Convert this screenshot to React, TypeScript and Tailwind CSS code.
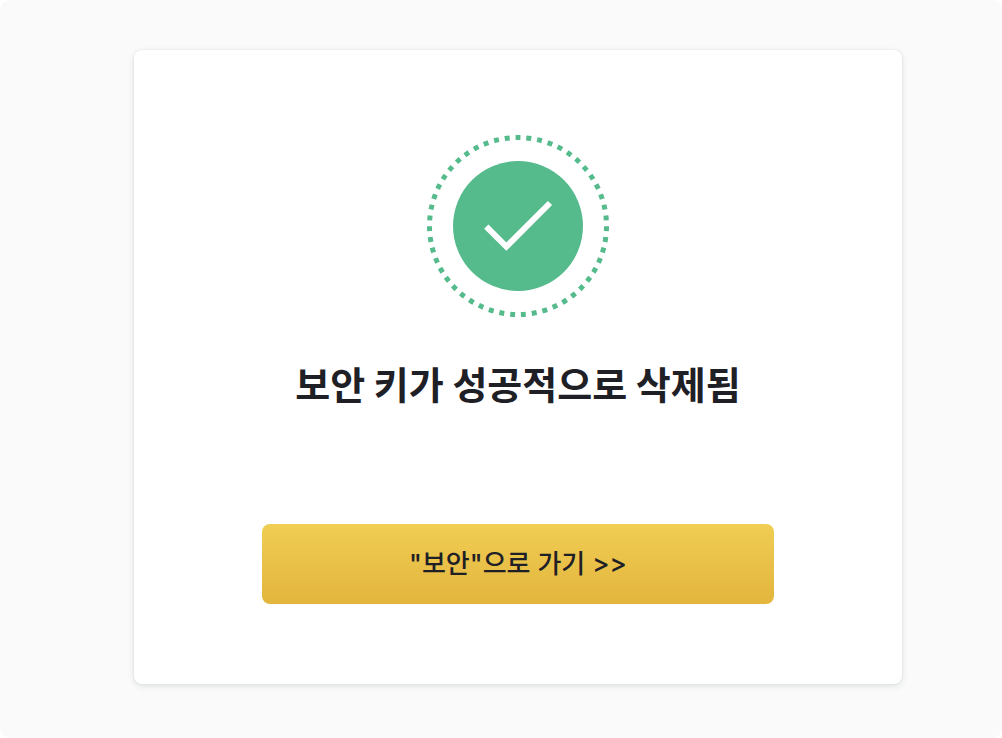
import React from "react";

function SuccessIcon() {
  return (
    <svg width="182" height="182" viewBox="0 0 182 182" fill="none" aria-hidden="true">
      {/* Dotted ring, 51 square dots starting at the top */}
      <circle
        cx="91"
        cy="91"
        r="88.5"
        stroke="#56bb8c"
        strokeWidth="5"
        pathLength="561"
        strokeDasharray="5 6"
        strokeDashoffset="2.5"
        transform="rotate(-90 91 91)"
      />
      <circle cx="91" cy="91" r="65" fill="#56bb8c" />
      <path d="M59.3 91.6L79.3 111.6L123 68" stroke="#fff" strokeWidth="6" />
    </svg>
  );
}

export default function App() {
  return (
    <div className="min-h-screen bg-white font-['Noto_Sans_CJK_KR',sans-serif] text-[#1e2026]">
      <main className="min-h-screen rounded-[10px] bg-[#fafafa] pt-[50px] pr-[100px] pb-[54px] pl-[134px]">
        <section className="flex flex-col items-center rounded-lg bg-white px-32 pt-[85px] pb-20 shadow-[0_2px_6px_rgba(20,50,40,0.12),0_0_2px_rgba(0,0,0,0.08)]">
          <SuccessIcon />
          <h1 className="mt-10 text-center text-[38px] leading-[52px] font-bold whitespace-nowrap">
            보안 키가 성공적으로 삭제됨
          </h1>
          <button
            type="button"
            className="mt-[115px] h-20 w-full rounded-lg bg-linear-to-b from-[#f0cd53] to-[#e3b53d] font-[Inter,'Noto_Sans_CJK_KR',sans-serif] text-[26px] leading-10 font-medium"
          >
            "보안"으로 가기 &gt;&gt;
          </button>
        </section>
      </main>
    </div>
  );
}
